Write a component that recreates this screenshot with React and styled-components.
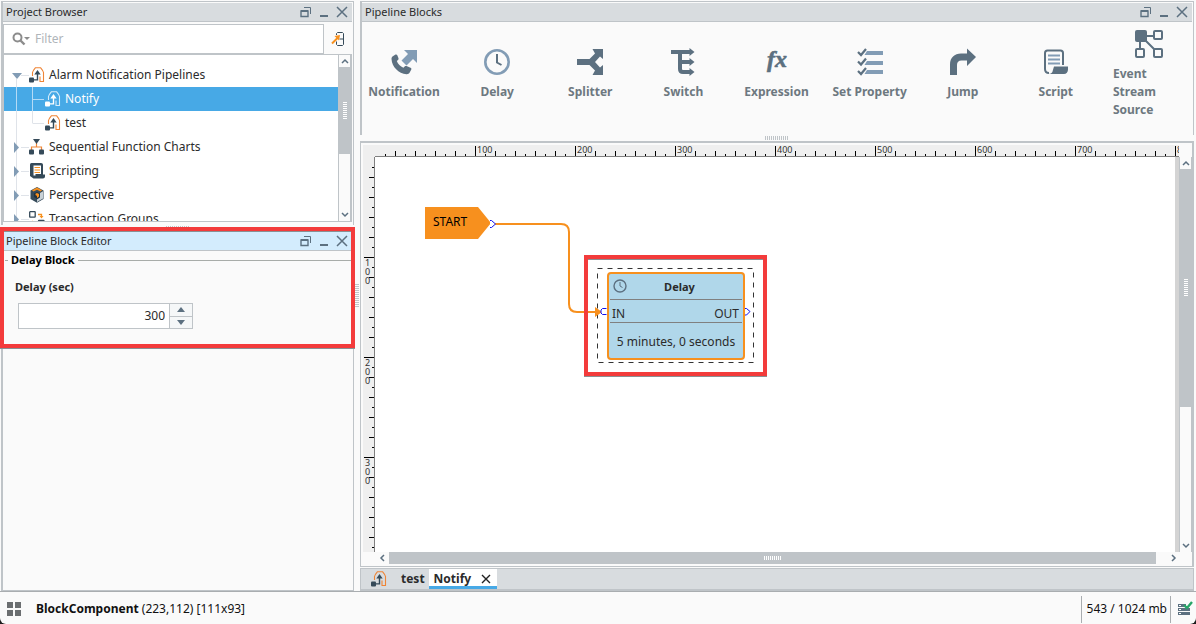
import React from "react";
import styled, { createGlobalStyle, css } from "styled-components";

const c = {
  line: "#bfc4c8",
  panel: "#fafafa",
  bar: "#d8dcdf",
  slate: "#5c7080",
  steel: "#829cb5",
  dark: "#354a59",
  orange: "#f7901e",
  blue: "#47a9e6",
  red: "#f33b3b",
  text: "#2b2b2b",
};

const GlobalStyle = createGlobalStyle`
  * { box-sizing: border-box; }
  html, body, #root { height: 100%; }
  body {
    margin: 0;
    background: #1c1c1c;
    color: ${c.text};
    font: 12px/18px "Noto Sans", sans-serif;
    overflow: hidden;
  }
  button, input { font: inherit; color: inherit; }
  button { border: 0; padding: 0; background: none; }
  svg { display: block; flex: none; }
`;

/* ---------- layout ---------- */

const Shell = styled.div`
  display: flex;
  flex-direction: column;
  height: 100vh;
  background: ${c.panel};
  border-radius: 0 0 6px 6px;
  overflow: hidden;
`;

const Workspace = styled.div`
  flex: 1;
  min-height: 0;
  display: grid;
  grid-template-columns: 353px 6px minmax(0, 1fr);
  padding: 1px 2px 0 1px;
  border-bottom: 1px solid #a9adb0;
`;

const Column = styled.div`
  display: flex;
  flex-direction: column;
  min-width: 0;
  min-height: 0;
`;

const Panel = styled.section`
  position: relative;
  display: flex;
  flex-direction: column;
  min-height: 0;
  flex: ${(p) => (p.$grow ? "1" : "none")};
  border: solid ${c.line};
  border-width: ${(p) => (p.$docked ? "0 1px 1px 2px" : "1px 1px 0 2px")};
  padding: 1px 1px 0 ${(p) => (p.$wide ? "1px" : "0")};
`;

const TitleBar = styled.header`
  display: flex;
  align-items: center;
  height: 19px;
  padding: 0 1px 0 3px;
  background: ${(p) => (p.$active ? "#d3ecfd" : c.bar)};
  border-bottom: 1px solid ${c.line};
`;

const Title = styled.h2`
  flex: 1;
  margin: 0;
  font-size: 11px;
  font-weight: 400;
  line-height: 18px;
`;

const WindowButton = styled.button`
  display: grid;
  place-items: center;
  width: 18px;
  height: 18px;
`;

const Splitter = styled.div`
  display: flex;
  align-items: center;
  justify-content: center;
  ${(p) => !p.$vertical && "height: 6px;"}
`;

const Grip = styled.i`
  ${(p) =>
    p.$vertical
      ? css`
          width: ${p.$thick}px;
          height: ${p.$length}px;
          background: repeating-linear-gradient(180deg, ${p.$color} 0 1px, transparent 1px 2px);
        `
      : css`
          height: ${p.$thick}px;
          width: ${p.$length}px;
          background: repeating-linear-gradient(90deg, ${p.$color} 0 1px, transparent 1px 2px);
        `}
`;

const Highlight = styled.div`
  position: absolute;
  inset: ${(p) => p.$inset};
  border: 4px solid ${c.red};
  box-shadow: 0 1px 0 #8a8f93, inset 0 1px 0 #8a8f93;
  pointer-events: none;
`;

const EditorMark = styled.div`
  position: absolute;
  top: -4px;
  left: -3px;
  right: -2px;
  height: 121px;
  pointer-events: none;
`;

/* ---------- scrollbars ---------- */

const Track = styled.div`
  display: flex;
  flex-direction: ${(p) => (p.$vertical ? "column" : "row")};
  background: ${c.panel};
  ${(p) =>
    p.$vertical
      ? `width: 13px; border-left: 1px solid ${c.line}; border-right: 1px solid ${c.line};`
      : "height: 12px; padding-left: 2px;"}
`;

const TrackButton = styled.button`
  flex: none;
  display: grid;
  place-items: center;
  ${(p) => (p.$vertical ? "height: 12px;" : "width: 12px;")}
`;

const Thumb = styled.div`
  flex: ${(p) => p.$size};
  display: grid;
  place-items: center;
  background: ${c.line};
`;

const Rest = styled.div`
  flex: ${(p) => p.$size};
`;

const chevrons = {
  up: "M1 6l3-3 3 3",
  down: "M1 2l3 3 3-3",
  left: "M5 1L2 4l3 3",
  right: "M3 1l3 3-3 3",
};

const Chevron = ({ dir }) => (
  <svg width="8" height="8" fill="none" stroke={c.slate} strokeWidth="1.5">
    <path d={chevrons[dir]} />
  </svg>
);

function Scrollbar({ vertical, thumb, rest }) {
  return (
    <Track $vertical={vertical}>
      <TrackButton $vertical={vertical} aria-label="Scroll back">
        <Chevron dir={vertical ? "up" : "left"} />
      </TrackButton>
      <Thumb $size={thumb}>
        <Grip $vertical={vertical} $thick={4} $length={18} $color="#fff" />
      </Thumb>
      <Rest $size={rest} />
      <TrackButton $vertical={vertical} aria-label="Scroll forward">
        <Chevron dir={vertical ? "down" : "right"} />
      </TrackButton>
    </Track>
  );
}

/* ---------- project browser ---------- */

const FilterRow = styled.div`
  display: flex;
  margin-top: 2px;
`;

const FilterBox = styled.label`
  flex: 1;
  display: flex;
  align-items: center;
  gap: 5px;
  height: 30px;
  padding-left: 8px;
  background: #fff;
  border: 1px solid ${c.line};
`;

const FilterInput = styled.input`
  flex: 1;
  min-width: 0;
  border: 0;
  padding: 0;
  outline: 0;
  background: none;
  &::placeholder { color: #b0b5ba; opacity: 1; }
`;

const FilterAction = styled.button`
  width: 28px;
  display: grid;
  place-items: center;
`;

const TreeBox = styled.div`
  display: flex;
  height: 168px;
  margin-bottom: 3px;
  background: #fff;
  border: 1px solid ${c.line};
`;

const TreeList = styled.ul`
  flex: 1;
  margin: 0;
  padding: 8px 0 0;
  list-style: none;
  overflow: hidden;
`;

const TreeRow = styled.li`
  display: flex;
  align-items: center;
  height: 24px;
  background: ${(p) => (p.$selected ? c.blue : "none")};
  color: ${(p) => (p.$selected ? "#fff" : c.text)};
`;

const TreeLabel = styled.span`
  margin-left: 4px;
`;

function Guide({ level, state, selected, last }) {
  const stroke = selected ? "#b5dbf6" : "#dfe3e9";
  const start = state === "open" ? 16 : 0;
  return (
    <svg width={level ? 41 : 25} height="24" fill="none" stroke={stroke}>
      <path d={`M12.5 ${start}V24`} />
      {level ? (
        <path d={`M28.5 0V${last ? 12 : 24}M28.5 12.5H40`} />
      ) : (
        <path d="M17 12.5H25" />
      )}
      {state === "open" && <path d="M8 10h10l-5 6z" fill={c.steel} stroke="none" />}
      {state === "closed" && <path d="M10 7v11l5-5.500z" fill={c.steel} stroke="none" />}
    </svg>
  );
}

const PipelineIcon = ({ tone, accent }) => (
  <svg width="16" height="16" viewBox="0 0 16 16">
    <path
      d="M3.500 9V5.500C3.700 4.500 5 2.500 6.500 .700h5C13 2.500 14.300 4.500 14.500 5.500V14.500H11V9.500"
      fill="none"
      stroke={accent || "#ef8536"}
      strokeWidth="1.100"
    />
    <path d="M8.500 3L11.700 7.500H9.200v6H4v-1.200h3.800V7.500H5.300z" fill={tone || c.dark} />
    <rect x="0" y="10.500" width="5" height="5" rx="1" fill={tone || c.dark} />
  </svg>
);

const ChartIcon = () => (
  <svg width="16" height="16" viewBox="0 0 16 16">
    <path d="M7.500 4v4M2.500 11V8h10v3" fill="none" stroke="#ef8536" strokeWidth="1.200" />
    <g fill={c.dark}>
      <path d="M4 0h7L7.500 5z" />
      <rect x="0" y="10.500" width="5" height="5" rx="1" />
      <rect x="10" y="10.500" width="5" height="5" rx="1" />
    </g>
  </svg>
);

const ScriptingIcon = () => (
  <svg width="16" height="16" viewBox="0 0 16 16">
    <path
      d="M2.500 0H12c1.300 0 2 .700 2 2v9.500h2v2c0 1.300-1 2-2 2H4.500L1 13V2C1 .700 1.500 0 2.500 0z"
      fill={c.dark}
    />
    <path d="M4.500 2.500H12V11H6.500v1.500h-2z" fill="#fff" />
    <path d="M5.500 4.500H11M5.500 7H11M5.500 9.500H11" stroke={c.orange} strokeWidth="1.200" />
  </svg>
);

const PerspectiveIcon = () => (
  <svg width="16" height="16" viewBox="0 0 16 16">
    <path d="M8 0l6.500 3.500v8.500L8 15.800 1.500 12V3.500z" fill={c.dark} />
    <path d="M8 .500L13 3.300 11.500 4.500 8 2.800 4.500 4.500 3 3.300z" fill={c.orange} />
    <path d="M11 6l3-1.800v7.300L8 15v-2.500l3-2z" fill="#c9d1d6" />
    <path d="M8 5l3 1.500v3.500L8 12 5 10V6.500z" fill="#22313c" />
    <path d="M8 6l2 1v2.500L8 11V9L6.500 8V6.800z" fill={c.orange} />
  </svg>
);

const TransactionIcon = () => (
  <svg width="16" height="16" viewBox="0 0 16 16" fill="none" strokeWidth="1.300">
    <g stroke={c.dark}>
      <rect x=".700" y=".700" width="5.500" height="5.500" rx=".500" />
      <rect x="9.500" y="9.500" width="5.500" height="5.500" rx=".500" />
    </g>
    <path d="M9 3.500h3.500V6M3.500 15v-4.500" stroke={c.orange} />
    <path d="M10.500 5h4l-2 2.500zM1.500 12l2-2.500 2 2.500z" fill={c.orange} />
  </svg>
);

const tree = [
  { label: "Alarm Notification Pipelines", icon: <PipelineIcon />, level: 0, state: "open" },
  { label: "Notify", icon: <PipelineIcon tone="#fff" accent="#d6ecfa" />, level: 1, selected: true },
  { label: "test", icon: <PipelineIcon />, level: 1, last: true },
  { label: "Sequential Function Charts", icon: <ChartIcon />, level: 0, state: "closed" },
  { label: "Scripting", icon: <ScriptingIcon />, level: 0, state: "closed" },
  { label: "Perspective", icon: <PerspectiveIcon />, level: 0, state: "closed" },
  { label: "Transaction Groups", icon: <TransactionIcon />, level: 0, state: "closed" },
];

/* ---------- block editor ---------- */

const Group = styled.fieldset`
  margin: 0 1px 0 2px;
  padding: 9px 0 0;
  border: 0;
  border-top: 1px solid #a8aca9;
  min-width: 0;
`;

const Legend = styled.legend`
  margin-left: 3px;
  padding: 0 3px;
  color: #000;
  font-weight: 700;
  font-size: 11px;
  line-height: 18px;
`;

const FieldLabel = styled.label`
  display: block;
  margin-left: 10px;
  font-weight: 700;
  font-size: 11px;
  line-height: 18px;
`;

const Spinner = styled.div`
  display: flex;
  width: 175px;
  height: 26px;
  margin: 7px 0 0 13px;
  border: 1px solid ${c.line};
  background: #fff;
`;

const SpinnerInput = styled.input`
  flex: 1;
  min-width: 0;
  border: 0;
  padding: 0 4px;
  outline: 0;
  text-align: right;
  background: none;
`;

const Steppers = styled.div`
  display: flex;
  flex-direction: column;
  width: 23px;
  border-left: 1px solid ${c.line};
`;

const Stepper = styled.button`
  flex: 1;
  display: grid;
  place-items: center;
  background: #f5f7f8;
  & + & { border-top: 1px solid ${c.line}; }
`;

/* ---------- palette ---------- */

const Palette = styled.div`
  display: grid;
  grid-template-columns: repeat(9, minmax(0, 1fr));
  gap: 3px;
  align-items: center;
  height: 113px;
  margin: 0 -2px 0 -3px;
  padding-bottom: 9px;
`;

const PaletteItem = styled.button`
  display: flex;
  flex-direction: column;
  align-items: center;
  gap: 7px;
  color: #6d7880;
  font-weight: 700;
`;

const PaletteLabel = styled.span`
  ${(p) => (p.$wrap ? "width: 72px; text-align: left;" : "white-space: nowrap;")}
`;

const Icon = ({ children }) => (
  <svg width="28" height="28" viewBox="0 0 28 28" fill="none">
    {children}
  </svg>
);

const palette = [
  {
    label: "Notification",
    icon: (
      <Icon>
        <path d="M14 2h13v13l-4-4-6.500 6.500-5-5L18 6z" fill={c.steel} />
        <path
          d="M2.500 8.500l3-2c.800-.300 1.500 0 1.800.700l1.200 3c.200.700 0 1.200-.500 1.700l-1.200 1.200c1.200 3 3.500 5.400 6.600 6.700l1.500-1.500c.500-.500 1-.500 1.600-.300l4 1.700c.800.400 1.100 1 .800 1.800l-1.600 3c-.700 1.200-1.700 1.800-3.200 1.700C8.500 25.500 2 19 1.500 11c0-1 .200-1.800 1-2.500z"
          fill={c.slate}
        />
      </Icon>
    ),
  },
  {
    label: "Delay",
    icon: (
      <Icon>
        <circle cx="14" cy="14" r="11.700" stroke={c.steel} strokeWidth="2.600" />
        <path d="M14 6v8.500l4.500 2.500" stroke={c.slate} strokeWidth="2" />
      </Icon>
    ),
  },
  {
    label: "Splitter",
    icon: (
      <Icon>
        <path
          d="M1 11h12.500l5.500-5.500L16.500 1H27v10l-3-2.500-5 5.500 5 5.500 3-2.500v10H16.500l2.500-4.500L13.500 17H1z"
          fill={c.slate}
        />
      </Icon>
    ),
  },
  {
    label: "Switch",
    icon: (
      <Icon>
        <path
          d="M2 4h19M11 4v17c0 2 1 3 3 3h7M11 14h10"
          stroke={c.slate}
          strokeWidth="4"
        />
        <path d="M20.500 0l5 4-5 4zM20.500 10l5 4-5 4zM20.500 20l5 4-5 4z" fill={c.slate} />
      </Icon>
    ),
  },
  {
    label: "Expression",
    icon: (
      <Icon>
        <text
          x="5"
          y="19"
          fill={c.slate}
          stroke={c.slate}
          strokeWidth=".600"
          fontFamily="Liberation Serif, serif"
          fontStyle="italic"
          fontSize="24"
        >
          fx
        </text>
      </Icon>
    ),
  },
  {
    label: "Set Property",
    icon: (
      <Icon>
        <path d="M11 3h16v4H8.500zM11 13h16v4H8.500zM11 22h16v4H8.500z" fill={c.steel} />
        <path
          d="M2 4l3 3 5-6M2 13.500l3 3 5-6M2 23l3 3 5-6"
          stroke={c.slate}
          strokeWidth="2.200"
        />
      </Icon>
    ),
  },
  {
    label: "Jump",
    icon: (
      <Icon>
        <path
          d="M1 27V16.500C1 9.500 5.500 5.500 12 5.500h6V.500L27 9l-9 9v-5.500h-5.500c-3 0-4.500 1.500-4.500 4.500V27z"
          fill={c.slate}
        />
      </Icon>
    ),
  },
  {
    label: "Script",
    icon: (
      <Icon>
        <path
          d="M21 17V5c0-1.700-.800-2.500-2.500-2.500h-13C3.800 2.500 3 3.300 3 5v16c0 2.700 1.300 4 4 4"
          stroke={c.slate}
          strokeWidth="2"
        />
        <path
          d="M12 18.500h14v3c0 2.700-1.600 4.500-4 4.500H6.500c2.700 0 4-1.300 4.300-3.500z"
          fill={c.slate}
        />
        <path d="M6 7.500h12M6 11.500h12M6 15.500h12" stroke={c.steel} strokeWidth="2" />
      </Icon>
    ),
  },
  {
    label: "Event Stream Source",
    wrap: true,
    icon: (
      <Icon>
        <path d="M6 6h15M5 6v15M8 8l13 13" stroke={c.slate} strokeWidth="2" />
        <rect x="0" y="0" width="12" height="12" rx="2" fill={c.slate} />
        <g fill={c.panel} stroke={c.slate} strokeWidth="2">
          <rect x="19" y="1" width="8" height="8" rx="1" />
          <rect x="1" y="19" width="8" height="8" rx="1" />
          <rect x="19" y="19" width="8" height="8" rx="1" />
        </g>
      </Icon>
    ),
  },
];

/* ---------- canvas ---------- */

const CanvasFrame = styled.div`
  flex: 1;
  min-height: 0;
  display: grid;
  grid-template-columns: 12px minmax(0, 1fr) 13px;
  grid-template-rows: 12px minmax(0, 1fr) 13px;
  padding: 2px 0 1px 2px;
  border: solid ${c.line};
  border-width: 2px 2px 1px 1px;
`;

const RulerCorner = styled.div`
  background: #efefef;
`;

const RulerX = styled.div`
  background: #efefef;
  border-bottom: 1px solid #808080;
  overflow: hidden;
`;

const RulerY = styled.div`
  background: #efefef;
  border-right: 1px solid #808080;
  overflow: hidden;
`;

const TickLabel = styled.text`
  font-size: 9px;
  fill: #333;
`;

const Canvas = styled.div`
  position: relative;
  background: #fff;
  border-right: 4px solid #d4d4d4;
  overflow: hidden;
`;

const Wires = styled.svg`
  position: absolute;
  inset: 0;
  width: 100%;
  height: 100%;
`;

const StartBlock = styled.div`
  position: absolute;
  left: 50px;
  top: 50px;
  width: 66px;
  height: 32px;
  padding-left: 8px;
  line-height: 30px;
  color: #000;
  background: ${c.orange};
  clip-path: polygon(0 0, 53px 0, 100% 50%, 53px 100%, 0 100%);
`;

const DelayBlock = styled.div`
  position: absolute;
  left: 232px;
  top: 115px;
  width: 138px;
  height: 88px;
  background: #b0d7ea;
  border: 2px solid ${c.orange};
  border-radius: 4px;
`;

const BlockHeader = styled.div`
  position: relative;
  display: flex;
  align-items: center;
  justify-content: center;
  height: 26px;
  margin: 0 1px;
  padding-left: 7px;
  border-bottom: 1px solid #808080;
  font-weight: 700;
  font-size: 11px;
  & > svg { position: absolute; left: 3px; top: 5px; }
`;

const BlockPorts = styled.div`
  display: flex;
  justify-content: space-between;
  height: 23px;
  margin: 0 1px;
  padding: 5px 3px 0 2px;
  border-bottom: 1px solid #808080;
`;

const BlockBody = styled.div`
  padding-top: 10px;
  text-align: center;
  white-space: nowrap;
`;

const CanvasMark = styled.div`
  position: absolute;
  left: 209px;
  top: 98px;
  width: 183px;
  height: 121px;
`;

const steps = (n) => Array.from({ length: n }, (_, i) => (i + 1) * 10);
const tickLength = (v) => (v % 100 === 0 ? 10 : v % 20 === 0 ? 5 : 2);

const HorizontalRuler = () => (
  <RulerX>
    <svg width="100%" height="11">
      {steps(240).map((v) => (
        <rect key={v} x={v} y={11 - tickLength(v)} width="1" height={tickLength(v)} />
      ))}
      {steps(80)
        .filter((v) => v % 100 === 0)
        .map((v) => (
          <TickLabel key={v} x={v + 2} y="8">
            {v}
          </TickLabel>
        ))}
    </svg>
  </RulerX>
);

const VerticalRuler = () => (
  <RulerY>
    <svg width="11" height="100%">
      {steps(160).map((v) => (
        <rect key={v} x={11 - tickLength(v)} y={v} width={tickLength(v)} height="1" />
      ))}
      {[100, 200, 300].map((v) => (
        <TickLabel key={v}>
          {String(v)
            .split("")
            .map((d, i) => (
              <tspan key={i} x="2" y={v + 9 + i * 9}>
                {d}
              </tspan>
            ))}
        </TickLabel>
      ))}
    </svg>
  </RulerY>
);

/* ---------- tabs and status ---------- */

const TabBar = styled.div`
  display: flex;
  height: 23px;
  margin-top: 1px;
  padding-left: 10px;
  background: ${c.bar};
  border: 1px solid ${c.line};
  border-bottom-width: 2px;
`;

const Tab = styled.div`
  display: flex;
  align-items: center;
  gap: ${(p) => (p.$active ? "10px" : "14px")};
  padding: ${(p) => (p.$active ? "2px 6px 0 5px" : "2px 4px 0 0")};
  background: ${(p) => (p.$active ? "#fff" : "none")};
  border-bottom: 3px solid ${(p) => (p.$active ? c.blue : "transparent")};
`;

const TabButton = styled.button`
  line-height: 16px;
  font-weight: 700;
`;

const StatusBar = styled.footer`
  display: flex;
  align-items: center;
  height: 32px;
  padding: 2px 0 0 7px;
  color: #111;
`;

const StatusText = styled.span`
  flex: 1;
  margin-left: 15px;
`;

const StatusCell = styled.span`
  display: flex;
  align-items: center;
  height: 27px;
  padding: 0 3px 0 5px;
  border-left: 1px solid #a9adb0;
`;

/* ---------- shared pieces ---------- */

function Bar({ title, active }) {
  return (
    <TitleBar $active={active}>
      <Title>{title}</Title>
      <WindowButton aria-label="Float">
        <svg width="12" height="12" fill="none" stroke={c.slate}>
          <path d="M4 1.500h6.500V8" />
          <path d="M1 5h7v5.500H1z" strokeWidth="1.400" />
          <path d="M1 5h7" strokeWidth="2" />
        </svg>
      </WindowButton>
      <WindowButton aria-label="Minimize">
        <svg width="10" height="12">
          <rect x="1" y="9" width="8" height="2" fill={c.slate} />
        </svg>
      </WindowButton>
      <WindowButton aria-label="Close">
        <svg width="12" height="12" stroke={c.slate} strokeWidth="1.500">
          <path d="M1 1l10 10M11 1L1 11" />
        </svg>
      </WindowButton>
    </TitleBar>
  );
}

export default function App() {
  return (
    <Shell>
      <GlobalStyle />
      <Workspace>
        <Column>
          <Panel>
            <Bar title="Project Browser" />
            <FilterRow>
              <FilterBox>
                <svg width="18" height="16" fill="none" stroke="#8c8c8c">
                  <circle cx="5.500" cy="6.500" r="4" strokeWidth="2" />
                  <path d="M8.500 9.500l4 4" strokeWidth="2.400" />
                  <path d="M12 6h6l-3 3z" fill="#8c8c8c" stroke="none" />
                </svg>
                <FilterInput aria-label="Filter" placeholder="Filter" />
              </FilterBox>
              <FilterAction aria-label="Locate in project">
                <svg width="14" height="14" fill="none">
                  <path d="M5.500 3V1.500L6.500 .500h5l1 1v11l-1 1h-5l-1-1V9.500M8.500 7h4" stroke={c.dark} />
                  <path d="M1 11.500L7 5.500" stroke={c.orange} strokeWidth="2" />
                  <path d="M3.500 4l5.500-1-1 5.500z" fill={c.orange} />
                </svg>
              </FilterAction>
            </FilterRow>
            <TreeBox>
              <TreeList role="tree">
                {tree.map((n) => (
                  <TreeRow key={n.label} role="treeitem" $selected={n.selected}>
                    <Guide level={n.level} state={n.state} selected={n.selected} last={n.last} />
                    {n.icon}
                    <TreeLabel>{n.label}</TreeLabel>
                  </TreeRow>
                ))}
              </TreeList>
              <Scrollbar vertical thumb={86} rest={54} />
            </TreeBox>
          </Panel>
          <Splitter>
            <Grip $thick={4} $length={24} $color={c.line} />
          </Splitter>
          <Panel $grow $docked>
            <Bar title="Pipeline Block Editor" active />
            <Group>
              <Legend>Delay Block</Legend>
              <FieldLabel htmlFor="delay">Delay (sec)</FieldLabel>
              <Spinner>
                <SpinnerInput id="delay" defaultValue="300" />
                <Steppers>
                  <Stepper aria-label="Increase">
                    <svg width="8" height="5" fill={c.slate}>
                      <path d="M0 5l4-5 4 5z" />
                    </svg>
                  </Stepper>
                  <Stepper aria-label="Decrease">
                    <svg width="8" height="5" fill={c.slate}>
                      <path d="M0 0h8L4 5z" />
                    </svg>
                  </Stepper>
                </Steppers>
              </Spinner>
            </Group>
            <EditorMark>
              <Highlight $inset="0" />
            </EditorMark>
          </Panel>
        </Column>

        <Splitter $vertical>
          <Grip $vertical $thick={4} $length={24} $color={c.line} />
        </Splitter>

        <Column>
          <Panel>
            <Bar title="Pipeline Blocks" />
            <Palette>
              {palette.map((p) => (
                <PaletteItem key={p.label}>
                  {p.icon}
                  <PaletteLabel $wrap={p.wrap}>{p.label}</PaletteLabel>
                </PaletteItem>
              ))}
            </Palette>
          </Panel>
          <Splitter>
            <Grip $thick={4} $length={24} $color={c.line} />
          </Splitter>
          <CanvasFrame>
            <RulerCorner />
            <HorizontalRuler />
            <span />
            <VerticalRuler />
            <Canvas>
              <StartBlock>START</StartBlock>
              <DelayBlock>
                <BlockHeader>
                  <svg width="14" height="14" fill="none" stroke={c.slate}>
                    <circle cx="7" cy="7" r="6" strokeWidth="1.400" />
                    <path d="M7 3v4l2.500 1.500" />
                  </svg>
                  Delay
                </BlockHeader>
                <BlockPorts>
                  <span>IN</span>
                  <span>OUT</span>
                </BlockPorts>
                <BlockBody>5 minutes, 0 seconds</BlockBody>
              </DelayBlock>
              <Wires fill="none">
                <rect x="222.500" y="111.500" width="156" height="94" stroke="#333" strokeDasharray="5 5" />
                <path
                  d="M120 67h66q8 0 8 8v72q0 8 8 8h20"
                  stroke={c.orange}
                  strokeWidth="2"
                />
                <path d="M220 150l7 5-7 5z" fill={c.orange} />
                <g stroke="#1010f0" fill="#fff">
                  <path d="M115 63.500h1.500l4 3.500-4 3.500H115" />
                  <path d="M231.500 151.500h-4l-1.500 1.500v3l1.500 1.500h4" />
                  <path d="M370 151.500h1.500l3.500 3-3.500 3.500H370" />
                </g>
              </Wires>
              <CanvasMark>
                <Highlight $inset="0" />
              </CanvasMark>
            </Canvas>
            <Scrollbar vertical thumb={236} rest={132} />
            <span />
            <Scrollbar thumb={768} rest={11} />
            <span />
          </CanvasFrame>
          <TabBar>
            <Tab>
              <PipelineIcon />
              <TabButton>test</TabButton>
            </Tab>
            <Tab $active>
              <TabButton>Notify</TabButton>
              <button aria-label="Close tab">
                <svg width="10" height="10" stroke="#222" strokeWidth="1.400">
                  <path d="M1 1l8 8M9 1L1 9" />
                </svg>
              </button>
            </Tab>
          </TabBar>
        </Column>
      </Workspace>

      <StatusBar>
        <svg width="14" height="14" fill="#6b6e70">
          <path d="M0 0h6v6H0zM8 0h6v6H8zM0 8h6v6H0zM8 8h6v6H8z" />
        </svg>
        <StatusText>
          <b>BlockComponent</b> (223,112) [111x93]
        </StatusText>
        <StatusCell>543 / 1024 mb</StatusCell>
        <StatusCell>
          <svg width="17" height="16" fill="none">
            <path d="M2 4.500h8M2 8.500h12M2 12.500h12" stroke={c.slate} strokeWidth="3" />
            <path d="M3 4.500h2M3 8.500h2M3 12.500h2" stroke="#fff" />
            <path d="M8 4l3 3 5-6" stroke="#27a567" strokeWidth="2.400" />
          </svg>
        </StatusCell>
      </StatusBar>
    </Shell>
  );
}
